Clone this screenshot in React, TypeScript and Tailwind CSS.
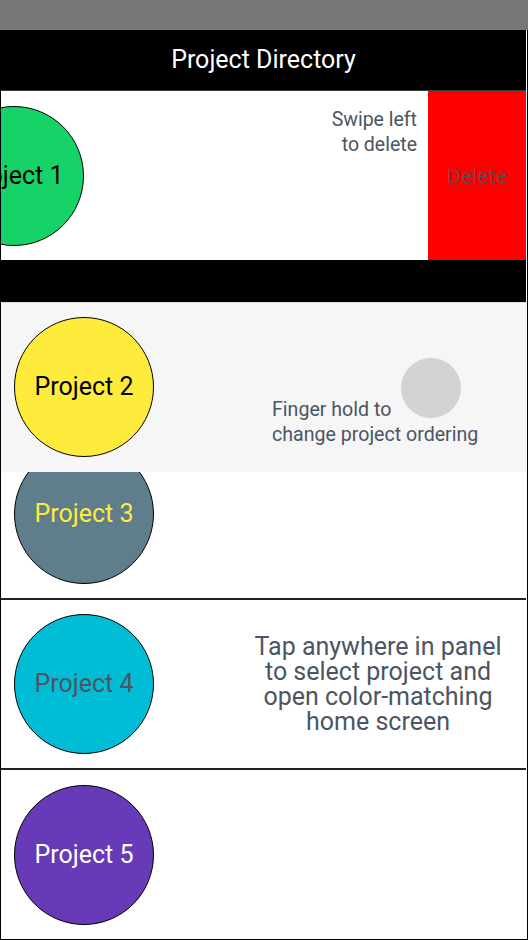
import React from "react";

type Project = {
  name: string;
  bg: string;
  text: string;
};

const projects: Project[] = [
  { name: "Project 1", bg: "bg-[#16d368]", text: "text-black" },
  { name: "Project 2", bg: "bg-[#ffeb3b]", text: "text-black" },
  { name: "Project 3", bg: "bg-[#607d8b]", text: "text-[#ffeb3b]" },
  { name: "Project 4", bg: "bg-[#00bcd4]", text: "text-[#4b5563]" },
  { name: "Project 5", bg: "bg-[#673ab7]", text: "text-white" },
];

const Circle = ({ project, className = "" }: { project: Project; className?: string }) => (
  <div
    className={`flex h-[140px] w-[140px] shrink-0 items-center justify-center whitespace-nowrap rounded-full border border-black text-[25px] ${project.bg} ${project.text} ${className}`}
  >
    {project.name}
  </div>
);

const App = () => {
  return (
    <div className="h-[940px] w-[528px] overflow-hidden bg-white font-['Roboto',sans-serif]">
      <div className="h-[30px] bg-[#777777]" />

      <div className="flex h-[910px] flex-col overflow-hidden border-x border-b border-black pr-px">
        {/* header */}
        <div className="flex h-[61px] shrink-0 items-center justify-center border-b border-[#3c3c3c] bg-black text-[25px] text-white">
          Project Directory
        </div>

        {/* row 1, swiped */}
        <div className="flex h-[169px] shrink-0 overflow-hidden bg-white">
          <div className="flex flex-1 items-start">
            <Circle project={projects[0]} className="ml-[-57px] self-center" />
            <p className="ml-auto mr-[11px] mt-[16px] text-right text-[19.5px] leading-[25px] text-[#4b5563]">
              Swipe left
              <br />
              to delete
            </p>
          </div>
          <div className="flex w-[98px] items-center justify-center bg-[#ff0000] font-['Open_Sans',sans-serif] text-[20px] text-[#5b4a52]">
            Delete
          </div>
        </div>

        {/* slot of the lifted row 2 */}
        <div className="relative z-10 h-[170px] shrink-0 bg-black">
          <div className="absolute left-0 right-0 top-[42px] flex h-[170px] items-start border-t border-[#dedede] bg-[#f6f6f6]">
            <Circle project={projects[1]} className="ml-[13px] mt-[14px]" />
            <p className="ml-[118px] mt-[94px] text-[19.6px] leading-[25px] text-[#4b5563]">
              Finger hold to
              <br />
              change project ordering
            </p>
            <div className="absolute left-[400px] top-[55px] h-[60px] w-[60px] rounded-full bg-[#d3d3d3]" />
          </div>
        </div>

        {/* row 3 */}
        <div className="flex h-[170px] shrink-0 items-center border-b-2 border-[#222]">
          <Circle project={projects[2]} className="ml-[13px]" />
        </div>

        {/* row 4 */}
        <div className="flex h-[170px] shrink-0 items-center border-b-2 border-[#222]">
          <Circle project={projects[3]} className="ml-[13px]" />
          <p className="ml-auto w-[296px] text-center text-[25px] leading-[25px] text-[#4b5563]">
            Tap anywhere in panel
            <br />
            to select project and
            <br />
            open color-matching
            <br />
            home screen
          </p>
        </div>

        {/* row 5 */}
        <div className="flex h-[169px] shrink-0 items-center">
          <Circle project={projects[4]} className="ml-[13px]" />
        </div>
      </div>
    </div>
  );
};

export default App;
